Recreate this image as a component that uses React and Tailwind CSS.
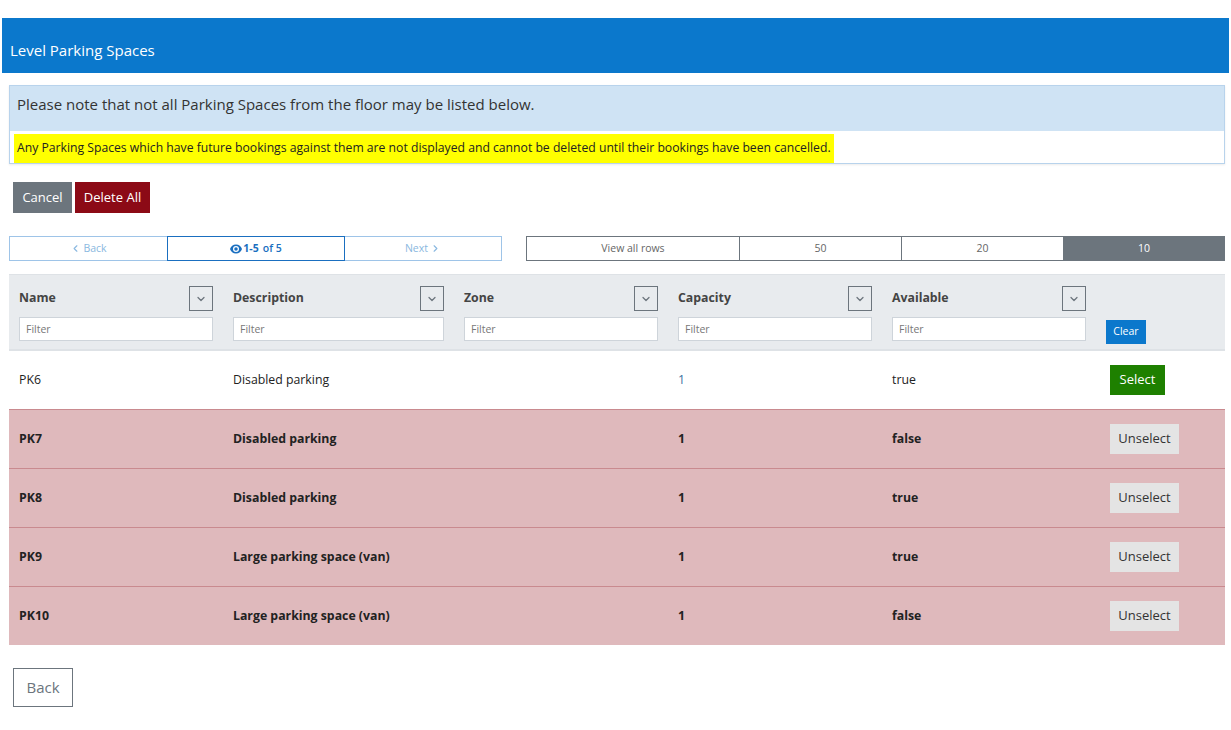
import React from "react";
import { ChevronLeft, ChevronRight, ChevronDown } from "lucide-react";

const rows = [
  { name: "PK6", description: "Disabled parking", capacity: "1", available: "true", selected: false },
  { name: "PK7", description: "Disabled parking", capacity: "1", available: "false", selected: true },
  { name: "PK8", description: "Disabled parking", capacity: "1", available: "true", selected: true },
  { name: "PK9", description: "Large parking space (van)", capacity: "1", available: "true", selected: true },
  { name: "PK10", description: "Large parking space (van)", capacity: "1", available: "false", selected: true },
];

const columns = ["Name", "Description", "Zone", "Capacity", "Available"];

const gridCols = "grid grid-cols-[214px_231px_214px_214px_214px_129px]";

const EyeIcon = () => (
  <svg width="12" height="10" viewBox="0 0 24 18" className="fill-[#1a6fc0]">
    <path d="M12 0C6 0 1.7 4 0 9c1.7 5 6 9 12 9s10.3-4 12-9C22.3 4 18 0 12 0zm0 15a6 6 0 1 1 0-12 6 6 0 0 1 0 12zm0-9.5a3.5 3.5 0 1 0 0 7 3.5 3.5 0 0 0 0-7z" />
  </svg>
);

const HeaderCell = ({ title }) => (
  <div className="px-[10px] pt-[11px] pb-[8px]">
    <div className="flex items-center justify-between h-[25px]">
      <span className="font-bold text-[12.3px] text-[#444]">{title}</span>
      <button className="w-[24px] h-[25px] border border-[#6c757d] flex items-center justify-center">
        <ChevronDown size={12} strokeWidth={2.5} className="text-[#6c757d]" />
      </button>
    </div>
    <input
      placeholder="Filter"
      className="mt-[6px] w-full h-[24px] bg-white border border-[#ced4da] px-[6px] text-[10.5px] text-[#333] placeholder:text-[#777] outline-none"
    />
  </div>
);

const Row = ({ row }) => {
  const rowBg = row.selected ? "bg-[#dfb9bc] border-t border-[#c98a8f] font-bold h-[59px]" : "bg-white h-[58px]";
  return (
    <div className={`${gridCols} items-center text-[12.3px] text-[#222] ${rowBg}`}>
      <div className="px-[10px]">{row.name}</div>
      <div className="px-[10px]">{row.description}</div>
      <div className="px-[10px]"></div>
      <div className={`px-[10px] ${row.selected ? "" : "text-[#3d6fa0]"}`}>{row.capacity}</div>
      <div className="px-[10px]">{row.available}</div>
      <div className="pl-[14px]">
        {row.selected ? (
          <button className="h-[30px] w-[69px] bg-[#e4e4e4] text-[#333] text-[13px] font-normal">Unselect</button>
        ) : (
          <button className="h-[30px] w-[55px] bg-[#1e8000] text-white text-[13px]">Select</button>
        )}
      </div>
    </div>
  );
};

export default function App() {
  return (
    <div className="min-h-[730px] bg-white pt-[18px] font-['Open_Sans','Noto_Sans',sans-serif]">
      <div className="mx-[2px] h-[55px] bg-[#0b78cc] text-white text-[15px] pl-2 pt-[9px] flex items-center">
        Level Parking Spaces
      </div>

      <div className="ml-[9px] w-[1216px]">
        <div className="mt-[12px] border border-[#b8d3ec] shadow-[0_1px_2px_rgba(0,0,0,0.08)]">
          <div className="h-[45px] bg-[#cfe3f4] pl-[7px] pt-[7px] text-[15px] text-[#333]">
            Please note that not all Parking Spaces from the floor may be listed below.
          </div>
          <div className="h-[32px] bg-white pl-[4px] pt-[3px] flex items-center">
            <span className="bg-[#ffff00] text-[12.2px] text-[#222] px-[3px] py-[5px]">
              Any Parking Spaces which have future bookings against them are not displayed and cannot be deleted until their bookings have been cancelled.
            </span>
          </div>
        </div>

        <div className="mt-[18px] ml-[4px] flex gap-[3px]">
          <button className="h-[31px] w-[59px] bg-[#6c757d] text-white text-[13px]">Cancel</button>
          <button className="h-[31px] w-[75px] bg-[#8c0a16] text-white text-[13px]">Delete All</button>
        </div>

        <div className="mt-[23px] flex h-[25px] text-[10.5px]">
          <div className="flex w-[493px] border border-[#9ec4e8]">
            <div className="w-[157px] flex items-center justify-center gap-[2px] text-[#8ab8e0]">
              <ChevronLeft size={11} strokeWidth={2.5} />
              Back
            </div>
            <div className="w-[178px] -my-px flex items-center justify-center gap-[1px] border border-[#1a6fc0] text-[#1a6fc0] font-semibold">
              <EyeIcon />
              <span className="font-bold">1-5</span>
              <span className="ml-[3px]">of 5</span>
            </div>
            <div className="flex-1 flex items-center justify-center gap-[2px] text-[#8ab8e0]">
              Next
              <ChevronRight size={11} strokeWidth={2.5} />
            </div>
          </div>
          <div className="ml-[24px] flex w-[699px] border border-[#6c757d] text-[#666]">
            <div className="w-[213px] flex items-center justify-center border-r border-[#6c757d]">View all rows</div>
            <div className="w-[162px] flex items-center justify-center border-r border-[#6c757d]">50</div>
            <div className="w-[161px] flex items-center justify-center">20</div>
            <div className="flex-1 -my-px -mr-px flex items-center justify-center bg-[#6c757d] text-white">10</div>
          </div>
        </div>

        <div className="mt-[13px]">
          <div className={`${gridCols} bg-[#e8ebee] border-t border-[#dee2e6] border-b-2 border-b-[#dee2e6]`}>
            {columns.map((c) => (
              <HeaderCell key={c} title={c} />
            ))}
            <div className="px-[10px] pt-[42px]">
              <button className="h-[24px] w-[40px] bg-[#0b78cc] text-white text-[10.5px]">Clear</button>
            </div>
          </div>
          {rows.map((r) => (
            <Row key={r.name} row={r} />
          ))}
        </div>

        <button className="mt-[23px] ml-[4px] w-[60px] h-[39px] border border-[#6c757d] text-[#6c757d] text-[15px]">
          Back
        </button>
      </div>
    </div>
  );
}
